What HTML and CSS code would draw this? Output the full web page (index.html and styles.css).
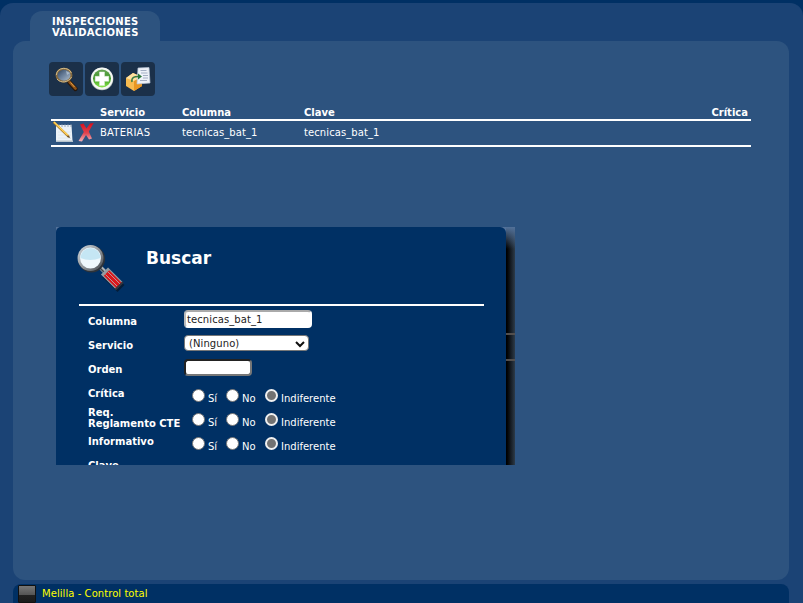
FILE: index.html
```html
<!DOCTYPE html>
<html lang="es">
<head>
<meta charset="utf-8">
<title>Inspecciones validaciones</title>
<link rel="stylesheet" href="styles.css">
</head>
<body>
<div class="frame">
  <div class="tab">INSPECCIONES<br>VALIDACIONES</div>
  <main class="panel">
    <div class="toolbar">
      <button class="tool" aria-label="Buscar">
        <svg width="34" height="34" viewBox="0 0 34 34">
          <defs><linearGradient id="lens" x1="0" y1="0" x2="1" y2="1"><stop offset="0" stop-color="#26384f"/><stop offset=".45" stop-color="#667c98"/><stop offset="1" stop-color="#b8c8d6"/></linearGradient></defs>
          <path d="M20.500 20.500L26.500 27" stroke="#27170b" stroke-width="4.400" stroke-linecap="round"/>
          <path d="M20.500 20L26.500 26.500" stroke="#8d5319" stroke-width="2.600" stroke-linecap="round"/>
          <path d="M21.500 20.500L25.500 25" stroke="#e5a349" stroke-width="1"/>
          <ellipse cx="15" cy="13.200" rx="7.500" ry="6.500" fill="url(#lens)" stroke="#856a3f" stroke-width="2"/>
          <path d="M7.300 13C8 4.500 20 4.500 22.300 11M8 17C12 22 20 20 22.500 15" fill="none" stroke="#d2ba88" stroke-width="1"/>
          <path d="M17 9L21 11L18 13Z" fill="#bdcad5" opacity=".7"/>
        </svg>
      </button>
      <button class="tool" aria-label="Nuevo">
        <svg width="34" height="34" viewBox="0 0 34 34">
          <defs><linearGradient id="green" x1="0" y1="0" x2="0" y2="1"><stop offset="0" stop-color="#69a557"/><stop offset=".5" stop-color="#3a9622"/><stop offset="1" stop-color="#8be84a"/></linearGradient></defs>
          <circle cx="17" cy="17" r="11.300" fill="#b2b8b5"/><circle cx="17" cy="16.500" r="10.900" fill="#f5f7f4"/>
          <circle cx="17" cy="16.500" r="9" fill="url(#green)"/>
          <path d="M14.500 10h5v4.300h4.300v5h-4.300v4.300h-5v-4.300h-4.300v-5h4.300z" fill="#fff" stroke="#e2eddf" stroke-width=".5"/>
        </svg>
      </button>
      <button class="tool" aria-label="Exportar">
        <svg width="34" height="34" viewBox="0 0 34 34">
          <path d="M5 16L12 11L21 15V24L13 29L5 24Z" fill="#f8bb50"/>
          <path d="M5 16L12 11L21 15L13 19Z" fill="#ffe0a0"/><path d="M13 19L21 15V24L13 29Z" fill="#e99622"/>
          <path d="M17 6L28 5.500L29 21L16 22Z" fill="#edf1f8" stroke="#b9c4d6" stroke-width=".7"/>
          <path d="M19.500 8.500h6M20 11h6.500M22 13.500h5M22 16h5M19 18.500h7" stroke="#a3aec4" stroke-width="1"/>
          <path d="M11 20C10 15 14 14.500 17 14.500" fill="none" stroke="#387a42" stroke-width="1.500"/><path d="M17 11.500L21 14.500L17 17.500Z" fill="#287535"/>
        </svg>
      </button>
    </div>
    <div class="table">
      <div class="row head"><span></span><span>Servicio</span><span>Columna</span><span>Clave</span><span class="last">Crítica</span></div>
      <div class="row data">
        <span class="actions">
          <svg width="22" height="22" viewBox="0 0 22 22">
            <path d="M4 4h15.500l1 16H4z" fill="#edf3f8"/><path d="M4 19.500h17v1.500H4z" fill="#b8c4cd"/>
            <path d="M6 11h13M6 14h13M6 17h13" stroke="#dce5ec" stroke-width=".8"/>
            <path d="M7 3v3M10 3v3M13 3v3M16 3v3M19 3v3" stroke="#8796a7" stroke-width=".8"/>
            <path d="M1.500 1L17 16" stroke="#a87620" stroke-width="2.400"/><path d="M2 1L16.500 15" stroke="#ffd15a" stroke-width="1.700"/><path d="M16 14l2.500 3.500-3.500-2z" fill="#634c31"/>
          </svg>
          <svg width="16" height="22" viewBox="0 0 16 22">
            <defs><linearGradient id="red" x1="0" y1="0" x2="0" y2="1"><stop offset="0" stop-color="#d80c18"/><stop offset=".55" stop-color="#df4650"/><stop offset="1" stop-color="#f0b5bd"/></linearGradient></defs>
            <path d="M2 3.500L5.500 2.500L8.500 7.500L12 2.500L15.700 2L10.800 10.500L14 17.500L11 18.500L8 14L4 20.500L.5 20L5.800 11Z" fill="url(#red)"/>
          </svg>
        </span>
        <span class="service">BATERIAS</span><span class="value">tecnicas_bat_1</span><span class="value">tecnicas_bat_1</span><span></span>
      </div>
    </div>
    <section class="dialog">
      <div class="sheet">
        <header class="title">
          <svg width="50" height="50" viewBox="0 0 50 50">
            <defs><linearGradient id="metal" x1="0" y1="0" x2="1" y2="1"><stop stop-color="#c9d1d7"/><stop offset=".5" stop-color="#969ba0"/><stop offset="1" stop-color="#494d53"/></linearGradient></defs>
            <path d="M29 30L44 44.500" stroke="#06172b" stroke-width="10" opacity=".75"/>
            <path d="M23 23L29 29" stroke="#aeb3b7" stroke-width="4"/><path d="M23 24L28 29" stroke="#42464b" stroke-width="1.500"/>
            <path d="M27.500 27L42.500 42" stroke="#969da2" stroke-width="10"/>
            <path d="M29.500 29L42 41.500" stroke="#da171b" stroke-width="7.600"/>
            <path d="M28.500 30.500L40.500 42.500M31 28L43 40" stroke="#b9a3a6" stroke-width=".9"/>
            <path d="M38.500 45.500L46 38" stroke="#34333b" stroke-width="1.800"/>
            <circle cx="14.500" cy="15" r="13.500" fill="#2e3339"/><circle cx="13.500" cy="14" r="11.700" fill="#eff8fd" stroke="url(#metal)" stroke-width="2.500"/>
            <path d="M3.500 14A10 10 0 0 1 23.500 14Q13 18 3.500 14" fill="#c5e6f4"/>
          </svg>
          <h1>Buscar</h1>
        </header>
        <form class="form">
          <label class="label">Columna</label><div><span class="text wide" role="textbox">tecnicas_bat_1</span></div>
          <label class="label">Servicio</label><div><span class="select">(Ninguno)<svg width="10" height="8" viewBox="0 0 10 8"><path d="M1 2L5 6L9 2" fill="none" stroke="#111" stroke-width="2"/></svg></span></div>
          <label class="label">Orden</label><div><input class="text order"></div>
          <label class="label">Crítica</label><div class="radios"><label class="si"><i class="dot"></i>Sí</label><label class="no"><i class="dot"></i>No</label><label><i class="dot on"></i>Indiferente</label></div>
          <label class="label two">Req.<br>Reglamento CTE</label><div class="radios"><label class="si"><i class="dot"></i>Sí</label><label class="no"><i class="dot"></i>No</label><label><i class="dot on"></i>Indiferente</label></div>
          <label class="label">Informativo</label><div class="radios"><label class="si"><i class="dot"></i>Sí</label><label class="no"><i class="dot"></i>No</label><label><i class="dot on"></i>Indiferente</label></div>
          <label class="label">Clave</label><div></div>
        </form>
      </div>
      <div class="shadow"><div class="seam"></div></div>
    </section>
  </main>
  <footer class="status"><span class="screen"></span><span>Melilla - Control total</span></footer>
</div>
</body>
</html>
```
FILE: styles.css
```css
* { box-sizing: border-box; }
html, body { height: 100%; }
body { margin: 0; padding-top: 3px; overflow: hidden; background: #003064; color: #fff; font: 10px/12px Verdana, "DejaVu Sans", sans-serif; }
.frame { height: 620px; padding: 8px 14px 0 13px; border-radius: 13px; background: #1b4375; }
.tab { width: 130px; height: 30px; margin-left: 17px; padding: 5px 0 0 22px; border-radius: 12px 12px 0 0; background: #2d537f; font-weight: bold; line-height: 11px; letter-spacing: .32px; white-space: nowrap; }
.panel { height: 539px; padding: 21px 38px 0 36px; border-radius: 12px; background: #2d537f; }
.toolbar { display: flex; gap: 2px; height: 34px; }
.tool { width: 34px; height: 34px; padding: 0; border: 0; border-radius: 4px; background: #1b3049; }
.tool svg { display: block; }
.table { width: 700px; margin: 11px 0 0 2px; }
.row { display: grid; grid-template-columns: 49px 82px 122px 300px 1fr; border-bottom: 2px solid #fff; }
.head { height: 14px; font-weight: bold; line-height: 11px; }
.last { padding-right: 3px; text-align: right; }
.data { height: 26px; line-height: 23px; }
.actions { display: flex; gap: 4px; padding-left: 1px; }
.actions svg { flex: none; }
.service { letter-spacing: .22px; }
.value { letter-spacing: .09px; }
.dialog { display: flex; width: 459px; height: 238px; margin: 80px 0 0 7px; overflow: hidden; background: #527199; }
.sheet { z-index: 1; width: 450px; height: 300px; padding: 0 22px 0 23px; border-radius: 5px 6px 0 0; background: #003064; }
.title { display: flex; height: 79px; padding-top: 17px; border-bottom: 2px solid #fff; }
.title svg { flex: none; margin-left: -2px; }
h1 { margin: 4px 0 0 19px; font-size: 17px; line-height: 20px; }
.form { display: grid; grid-template-columns: 96px 1fr; grid-auto-rows: 24px; padding: 4px 0 0 9px; }
.label { padding-top: 6px; font-weight: bold; line-height: 11px; white-space: nowrap; }
.label.two { padding-top: 1px; }
.text { display: block; height: 18px; margin: 0; padding: 0 1px; border: 2px solid #aaa; border-color: #aaa #fff #fff #bbb; border-radius: 4px; background: #fff; color: #222; font: inherit; letter-spacing: .09px; }
.wide { width: 128px; line-height: 16px; }
.order { width: 68px; height: 17px; margin-top: 1px; border-color: #222 #777 #777 #222; }
.select { display: flex; align-items: center; justify-content: space-between; width: 125px; height: 16px; margin-top: 1px; padding: 1px 3px 0 4px; border: 1px solid #777; border-radius: 4px; background: #fff; color: #222; letter-spacing: .09px; }
.radios { display: flex; padding: 7px 0 0 8px; line-height: 20px; }
.radios label { display: flex; gap: 3px; }
.si { width: 34px; }
.no { width: 39px; }
.dot { width: 13px; height: 13px; border: 1px solid #777; border-radius: 50%; background: #fff; }
.dot.on { border: 2px solid #f0f0f0; background: #727272; }
.shadow { width: 9px; height: 238px; padding-top: 106px; background: linear-gradient(180deg, #527199 0, #52719900 22px), linear-gradient(90deg, #000 10%, #2d3b49); }
.seam { height: 28px; border: solid #534f4d; border-width: 2px 0; }
.status { display: flex; height: 27px; margin-top: 4px; padding: 1px 0 0 5px; border-radius: 8px; background: #003064; color: #ff0; line-height: 17px; letter-spacing: .06px; }
.screen { width: 18px; height: 18px; margin-right: 6px; border: 1px solid #111; border-radius: 1px; background: linear-gradient(#777, #555 55%, #222 56%, #1b1b1b); }
```
